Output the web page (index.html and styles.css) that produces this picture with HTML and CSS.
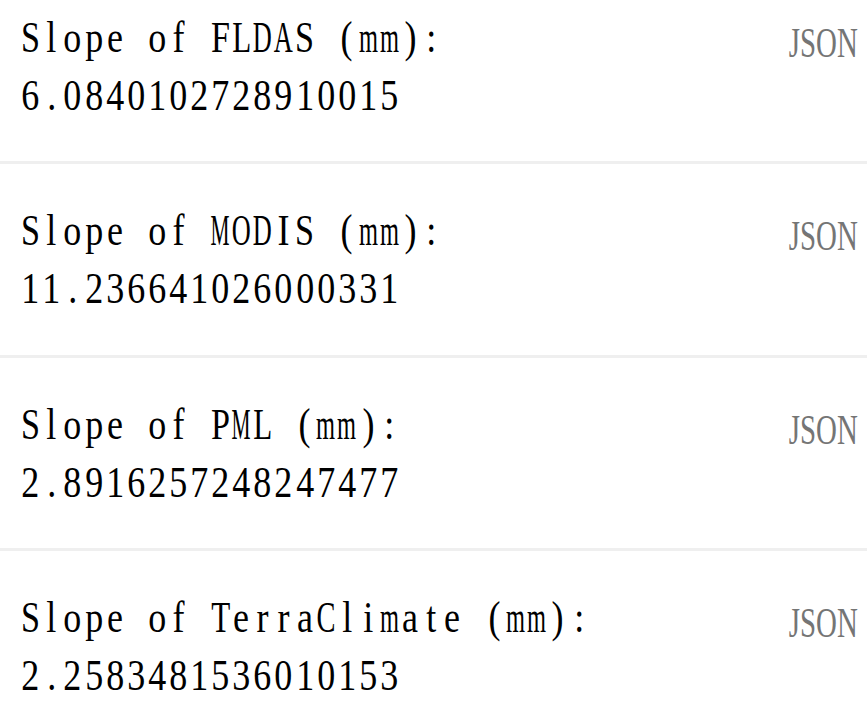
FILE: index.html
```html
<!DOCTYPE html>
<html>
<head>
<meta charset="utf-8">
<link rel="stylesheet" href="styles.css">
</head>
<body>
<div class="list">
  <div class="row">
    <div class="text"><div class="mono">Slope of FLDAS (mm):</div><div class="mono">6.0840102728910015</div></div>
    <span class="json">JSON</span>
  </div>
  <div class="row">
    <div class="text"><div class="mono">Slope of MODIS (mm):</div><div class="mono">11.236641026000331</div></div>
    <span class="json">JSON</span>
  </div>
  <div class="row">
    <div class="text"><div class="mono">Slope of PML (mm):</div><div class="mono">2.8916257248247477</div></div>
    <span class="json">JSON</span>
  </div>
  <div class="row">
    <div class="text"><div class="mono">Slope of TerraClimate (mm):</div><div class="mono">2.2583481536010153</div></div>
    <span class="json">JSON</span>
  </div>
</div>
<script src="script.js"></script>
</body>
</html>
```
FILE: styles.css
```css
html, body {
  margin: 0;
  padding: 0;
  background: #ffffff;
}
.list {
  display: flex;
  flex-direction: column;
}
.row {
  display: flex;
  justify-content: space-between;
  align-items: flex-start;
  padding: 36.8px 9px 37.7px 20px;
  border-bottom: 3px solid #efefef;
}
.row:first-child {
  padding-top: 7.8px;
}
.text {
  font-family: "Liberation Serif", serif;
  font-size: 45px;
  line-height: 58px;
  color: #000;
}
.mono {
  white-space: nowrap;
  height: 58px;
}
.cell {
  display: inline-flex;
  justify-content: center;
  width: 21.1px;
  white-space: pre;
}
.glyph {
  display: inline-block;
  flex: none;
  transform-origin: 50% 50%;
}
.json {
  font-family: "Liberation Serif", serif;
  font-size: 43px;
  line-height: 58px;
  color: #757575;
  margin-top: 6px;
  transform: scaleX(0.672);
  transform-origin: 100% 0;
}
```
FILE: script.js
```js
document.querySelectorAll('.mono').forEach(function (el) {
  var text = el.textContent;
  el.textContent = '';
  var glyphs = [];
  for (var i = 0; i < text.length; i++) {
    var cell = document.createElement('span');
    cell.className = 'cell';
    var g = document.createElement('span');
    g.className = 'glyph';
    g.textContent = text[i];
    cell.appendChild(g);
    el.appendChild(cell);
    glyphs.push(g);
  }
  glyphs.forEach(function (g) {
    var w = g.getBoundingClientRect().width;
    if (w > 0) {
      var s = Math.min(0.8, 19 / w);
      g.style.transform = 'scaleX(' + s.toFixed(3) + ')';
    }
  });
});
```
